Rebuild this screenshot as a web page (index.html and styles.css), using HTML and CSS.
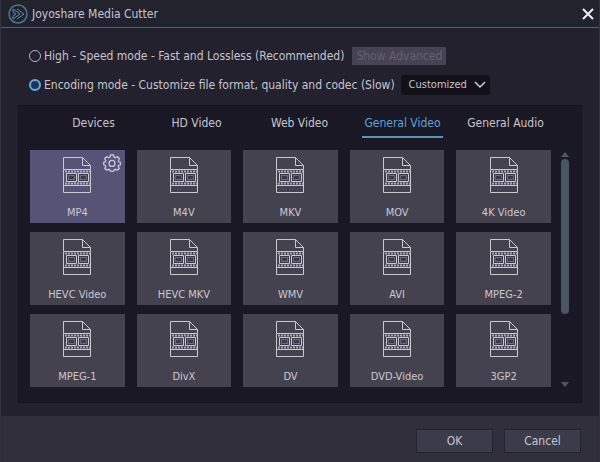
FILE: index.html
```
<!DOCTYPE html>
<html lang="en">
<head>
<meta charset="UTF-8">
<meta name="viewport" content="width=device-width, initial-scale=1.0">
<title>Joyoshare Media Cutter</title>
<link rel="stylesheet" href="styles.css">
</head>
<body>
  <svg class="sprite" aria-hidden="true">
    <symbol id="film" viewBox="0 0 30 38">
      <path d="M5 18H14V26H5ZM17 18H26V26H17Z" fill="#3c3a4a"/>
      <g fill="none" stroke="currentColor">
        <path d="M1.500 13V1.500H20.500L28.500 9.500V13M1.500 29V36.500H28.500V29M20.500 1.500V9.500H28.500"/>
        <path d="M1.500 13.500H28.500V29.500H1.500Z"/>
        <path d="M3 15.500H28M3 27.500H28" stroke-dasharray="2 1" stroke-width="2" opacity="0.750"/>
        <path d="M4.500 17.500H14.500V25.500H4.500ZM16.500 17.500H26.500V25.500H16.500Z"/>
        <path d="M6.500 19.500H12.500V23.500H6.500ZM18.500 19.500H24.500V23.500H18.500Z" opacity="0.350"/>
      </g>
    </symbol>
  </svg>
  <div class="window">
    <header class="titlebar">
      <svg class="logo" viewBox="0 0 20 20" fill="none" stroke="#5790b4">
        <circle cx="10" cy="10" r="9" stroke="#52758f" stroke-width="1.500"/>
        <path d="M5 5L12 10L5 15V12L8 10L5 8ZM9 5L16 10L9 15"/>
      </svg>
      <h1>Joyoshare Media Cutter</h1>
      <button type="button" class="close" aria-label="Close">
        <svg viewBox="0 0 12 12"><path d="M1 1L11 11M11 1L1 11" stroke="#eeeef2" stroke-width="2"/></svg>
      </button>
    </header>

    <main>
      <div class="modes">
        <div class="mode">
          <input type="radio" name="mode" id="highSpeed">
          <label for="highSpeed">High - Speed mode - Fast and Lossless (Recommended)</label>
          <button type="button" class="advanced" disabled>Show Advanced</button>
        </div>
        <div class="mode">
          <input type="radio" name="mode" id="encoding" checked>
          <label for="encoding">Encoding mode - Customize file format, quality and codec (Slow)</label>
          <div class="select">
            <select aria-label="Quality">
              <option>Customized</option>
            </select>
            <svg viewBox="0 0 12 8"><path d="M1 1L6 6L11 1" fill="none" stroke="#d0d0d8" stroke-width="1.500"/></svg>
          </div>
        </div>
      </div>

      <section class="panel">
        <nav class="tabs">
          <button type="button">Devices</button>
          <button type="button">HD Video</button>
          <button type="button">Web Video</button>
          <button type="button" class="active">General Video</button>
          <button type="button">General Audio</button>
        </nav>
        <div class="list">
          <div class="formats">
            <div class="format selected">
              <button type="button" class="card"><svg><use href="#film"/></svg>MP4</button>
              <button type="button" class="gear" aria-label="Settings">
                <svg viewBox="0 0 18 18" fill="none" stroke="#c6c6da" stroke-width="1.300">
                  <path d="M7.500 1H10.500L11.100 3.200L12.300 3.700L14.300 2.600L16.400 4.700L15.300 6.700L15.800 7.900L17.500 8.200V10.800L15.700 11.200L15.200 12.400L16.300 14.300L14.300 16.300L12.300 15.300L11.100 15.800L10.500 17.500H7.500L6.900 15.800L5.700 15.300L3.700 16.300L1.700 14.300L2.800 12.400L2.300 11.200L0.700 10.800V8.200L2.300 7.900L2.800 6.700L1.700 4.700L3.700 2.600L5.700 3.700L6.900 3.200Z"/>
                  <circle cx="9" cy="9.400" r="3"/>
                </svg>
              </button>
            </div>
            <div class="format"><button type="button" class="card"><svg><use href="#film"/></svg>M4V</button></div>
            <div class="format"><button type="button" class="card"><svg><use href="#film"/></svg>MKV</button></div>
            <div class="format"><button type="button" class="card"><svg><use href="#film"/></svg>MOV</button></div>
            <div class="format"><button type="button" class="card"><svg><use href="#film"/></svg>4K Video</button></div>
            <div class="format"><button type="button" class="card"><svg><use href="#film"/></svg>HEVC Video</button></div>
            <div class="format"><button type="button" class="card"><svg><use href="#film"/></svg>HEVC MKV</button></div>
            <div class="format"><button type="button" class="card"><svg><use href="#film"/></svg>WMV</button></div>
            <div class="format"><button type="button" class="card"><svg><use href="#film"/></svg>AVI</button></div>
            <div class="format"><button type="button" class="card"><svg><use href="#film"/></svg>MPEG-2</button></div>
            <div class="format"><button type="button" class="card"><svg><use href="#film"/></svg>MPEG-1</button></div>
            <div class="format"><button type="button" class="card"><svg><use href="#film"/></svg>DivX</button></div>
            <div class="format"><button type="button" class="card"><svg><use href="#film"/></svg>DV</button></div>
            <div class="format"><button type="button" class="card"><svg><use href="#film"/></svg>DVD-Video</button></div>
            <div class="format"><button type="button" class="card"><svg><use href="#film"/></svg>3GP2</button></div>
          </div>
          <div class="scrollbar">
            <svg viewBox="0 0 8 5"><path d="M0 5L4 0L8 5Z"/></svg>
            <div class="track"><div class="thumb"></div></div>
            <svg viewBox="0 0 8 5"><path d="M0 0L4 5L8 0Z"/></svg>
          </div>
        </div>
      </section>
    </main>

    <footer>
      <button type="button">OK</button>
      <button type="button">Cancel</button>
    </footer>
  </div>
</body>
</html>
```

FILE: styles.css
```
* {
  box-sizing: border-box;
}

body {
  margin: 0;
  background-color: #23212d;
  color: #c5c5ce;
  font-family: "DejaVu Sans Condensed", "DejaVu Sans", Tahoma, sans-serif;
  font-stretch: condensed;
  font-size: 12px;
}

button,
select {
  font: inherit;
  color: inherit;
  border: none;
  padding: 0;
  cursor: pointer;
}

svg {
  display: block;
}

.sprite {
  display: none;
}

.window {
  display: flex;
  flex-direction: column;
  min-height: 100vh;
  border-left: 1px solid #34323f;
  border-right: 1px solid #34323f;
}

/* Title bar */
.titlebar {
  display: flex;
  align-items: center;
  height: 28px;
  padding: 0 5px 0 7px;
  background: linear-gradient(#23222d, #20232e);
  border-bottom: 1px solid #3d6577;
}

.logo {
  width: 20px;
  height: 20px;
}

.titlebar h1 {
  margin: 0 auto 0 4px;
  font-size: 12px;
  font-weight: normal;
}

.close {
  background: none;
}

.close svg {
  width: 12px;
  height: 12px;
}

main {
  flex: 1;
  padding: 13px 17px;
}

/* Modes */
.modes {
  padding: 0 11px;
  margin-bottom: 6px;
}

.mode {
  display: flex;
  align-items: center;
  height: 29px;
}

.mode input {
  appearance: none;
  width: 12px;
  height: 12px;
  margin: 0 3px 0 0;
  border: 1px solid #b4b4be;
  border-radius: 50%;
}

.mode input:checked {
  border: 2px solid #67a9dc;
  background-color: #163a5e;
}

.advanced {
  height: 18px;
  padding: 0 4px;
  margin-left: 8px;
  background-color: #464352;
  color: #65616f;
}

.select {
  position: relative;
  margin-left: 6px;
}

.select select {
  appearance: none;
  height: 20px;
  padding: 0 22px 0 8px;
  border-radius: 3px;
  background-color: #12111a;
  font-size: 11px;
}

.select svg {
  position: absolute;
  top: 6px;
  right: 4px;
  width: 12px;
  height: 8px;
  pointer-events: none;
}

/* Format panel */
.panel {
  padding: 3px 12px 15px 11px;
  background-color: #191824;
  border: 1px solid #15141e;
}

.tabs {
  display: grid;
  grid-template-columns: repeat(5, 1fr);
  justify-items: center;
  margin: 0 12px 12px;
}

.tabs button {
  height: 29px;
  padding: 0 2px;
  background: none;
  border-bottom: 2px solid transparent;
  white-space: nowrap;
}

.tabs .active {
  color: #5aa5d9;
  border-color: #5596c1;
}

.list {
  display: flex;
  gap: 10px;
}

.formats {
  flex: 1;
  display: grid;
  grid-template-columns: repeat(5, 1fr);
  gap: 9px 12px;
}

.format {
  position: relative;
}

.card {
  display: flex;
  flex-direction: column;
  align-items: center;
  gap: 12px;
  width: 100%;
  height: 73px;
  padding-top: 6px;
  background-color: #45424f;
  color: #c9c9d0;
  font-size: 11px;
}

.card svg {
  width: 30px;
  height: 38px;
}

.selected .card {
  background-color: #555476;
}

.gear {
  position: absolute;
  top: 4px;
  right: 4px;
  background: none;
}

.gear svg {
  width: 18px;
  height: 18px;
}

.scrollbar {
  display: flex;
  flex-direction: column;
  align-items: center;
  gap: 2px;
  width: 8px;
  padding-top: 2px;
}

.scrollbar svg {
  width: 8px;
  height: 5px;
  fill: #505763;
}

.track {
  flex: 1;
  width: 8px;
}

.thumb {
  height: 70%;
  border-radius: 4px;
  background-color: #4b5663;
}

/* Footer */
footer {
  display: flex;
  justify-content: flex-end;
  gap: 11px;
  padding: 13px 18px 9px;
  background-color: #322f3c;
}

footer button {
  width: 77px;
  height: 24px;
  background-color: #3b3c49;
  border: 1px solid #232330;
}
```
